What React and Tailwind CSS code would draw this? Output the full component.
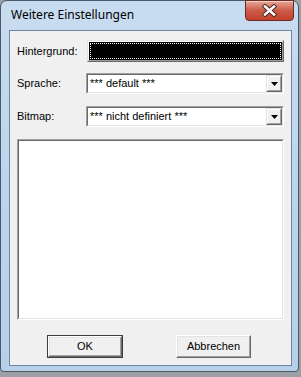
import React from "react";

const ui = { fontFamily: '"Liberation Sans", Arial, sans-serif' };

const Sunken = ({ className = "", children }) => (
  <div className={`border border-t-[#a0a0a0] border-l-[#a0a0a0] border-r-white border-b-white ${className}`}>
    <div className="h-full w-full border border-t-[#696969] border-l-[#696969] border-r-[#e3e3e3] border-b-[#e3e3e3] bg-white">
      {children}
    </div>
  </div>
);

const Combo = ({ value }) => (
  <Sunken className="h-[21px] flex-1">
    <div className="flex h-full items-center">
      <span className="flex-1 pl-[2px] text-[11px] leading-none text-black">{value}</span>
      <div className="h-[17px] w-[16px] border border-t-[#e3e3e3] border-l-[#e3e3e3] border-r-[#696969] border-b-[#696969]">
        <div className="flex h-full w-full items-center justify-center border border-t-white border-l-white border-r-[#a0a0a0] border-b-[#a0a0a0] bg-[#f0f0f0]">
          <svg width="7" height="4" viewBox="0 0 7 4">
            <path d="M0 0h7L3.5 4z" fill="#000" />
          </svg>
        </div>
      </div>
    </div>
  </Sunken>
);

const Btn = ({ label, isDefault, className = "" }) => (
  <div className={`h-[23px] ${isDefault ? "border border-[#3c3c3c]" : ""} ${className}`}>
    <div className="h-full w-full border border-t-white border-l-white border-r-[#696969] border-b-[#696969]">
      <div className="flex h-full w-full items-center justify-center border border-t-[#e3e3e3] border-l-[#e3e3e3] border-r-[#a0a0a0] border-b-[#a0a0a0] bg-[#f0f0f0] text-[11px] leading-none text-black">
        {label}
      </div>
    </div>
  </div>
);

export default function App() {
  return (
    <div className="h-[377px] w-[301px] overflow-hidden bg-[#9c9fa3]" style={ui}>
      <div className="flex h-[372px] w-[299px] flex-col rounded-t-[7px] rounded-b-[4px] border border-[#4b5866] bg-gradient-to-b from-[#c8dcf1] via-[#bcd5ee] to-[#b7d0ea] pl-[8px] pr-[6px] pb-[5px]">
        {/* title bar */}
        <div className="relative flex h-[29px] items-start">
          <span
            className="mt-[8px] ml-[2px] text-[12px] leading-none text-black"
            style={{ fontFamily: '"Noto Sans", "Open Sans", sans-serif' }}
          >
            Weitere Einstellungen
          </span>
          <div className="absolute right-[-2px] top-[-1px] flex h-[21px] w-[49px] items-center justify-center rounded-b-[4px] border border-[#6b2a20] bg-gradient-to-b from-[#e6a898] via-[#cc5a48] to-[#c2412c] shadow-[inset_0_1px_0_rgba(255,255,255,0.5)]">
            <svg width="15" height="13" viewBox="0 0 15 13">
              <path d="M3 2.5l9 8M12 2.5l-9 8" stroke="#4a2520" strokeWidth="4.5" strokeLinecap="square" />
              <path d="M3 2.5l9 8M12 2.5l-9 8" stroke="#fff" strokeWidth="2.6" strokeLinecap="square" />
            </svg>
          </div>
        </div>

        {/* client area */}
        <div className="flex flex-1 flex-col border border-[#6f87a1] bg-[#f0f0f0] px-[7px] pt-[9px] pb-[7px]">
          <div className="flex h-[22px] items-center">
            <span className="w-[70px] text-[11px] leading-none text-black">Hintergrund:</span>
            <div className="h-[22px] flex-1 border border-t-[#e3e3e3] border-l-[#e3e3e3] border-r-[#696969] border-b-[#696969]">
              <div className="h-full w-full border border-t-white border-l-white border-r-[#a0a0a0] border-b-[#a0a0a0] bg-black p-px">
                <div className="h-full w-full border border-dotted border-white" />
              </div>
            </div>
          </div>

          <div className="mt-[11px] flex items-center">
            <span className="w-[69px] text-[11px] leading-none text-black">Sprache:</span>
            <Combo value="*** default ***" />
          </div>

          <div className="mt-[12px] flex items-center">
            <span className="w-[69px] text-[11px] leading-none text-black">Bitmap:</span>
            <Combo value="*** nicht definiert ***" />
          </div>

          <Sunken className="mt-[12px] h-[181px]" />

          <div className="mt-[15px] flex">
            <Btn label="OK" isDefault className="ml-[30px] w-[76px]" />
            <Btn label="Abbrechen" className="ml-[53px] w-[75px]" />
          </div>
        </div>
      </div>
    </div>
  );
}
